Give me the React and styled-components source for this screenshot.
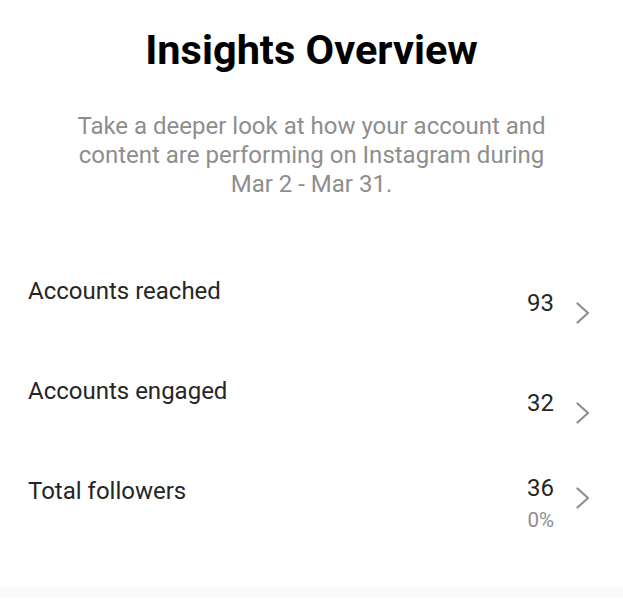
import React from 'react';
import styled, { createGlobalStyle } from 'styled-components';

const GlobalStyle = createGlobalStyle`
  html, body {
    margin: 0;
    padding: 0;
    background: #ffffff;
    font-family: Roboto, "Liberation Sans", sans-serif;
  }
`;

const Page = styled.div`
  width: 623px;
  height: 600px;
  display: flex;
  flex-direction: column;
  background: #fff;
  overflow: hidden;
`;

const Header = styled.header`
  display: flex;
  flex-direction: column;
  align-items: center;
  padding-top: 22px;
`;

const Title = styled.h1`
  margin: 0;
  font-size: 41.5px;
  font-weight: 700;
  color: #000;
  line-height: 56px;
`;

const Subtitle = styled.p`
  margin: 34px 0 0;
  width: 490px;
  text-align: center;
  font-size: 24px;
  line-height: 29px;
  color: #8e8e8e;
`;

const List = styled.div`
  display: flex;
  flex-direction: column;
  margin-top: 54px;
`;

const Row = styled.div`
  display: flex;
  align-items: center;
  justify-content: space-between;
  padding: 0 33px 0 28px;
  height: 100px;
`;

const Label = styled.span`
  font-size: 24px;
  line-height: 28px;
  margin-bottom: 24px;
  color: #262626;
`;

const Side = styled.div`
  display: flex;
  align-items: flex-start;
  gap: 22px;
`;

const Values = styled.div`
  display: flex;
  flex-direction: column;
  align-items: flex-end;
`;

const Value = styled.span`
  font-size: 24px;
  line-height: 26px;
  color: #262626;
`;

const Delta = styled.span`
  margin-top: 7px;
  font-size: 20.5px;
  line-height: 24px;
  color: #8e8e8e;
`;

const Chevron = styled.svg`
  width: 14px;
  height: 22px;
  margin-top: 12px;
  margin-bottom: -12px;
`;

const Footer = styled.div`
  height: 11px;
  margin-top: auto;
  margin-bottom: 2px;
  background: #fafafa;
`;

const rows = [
  { label: 'Accounts reached', value: '93' },
  { label: 'Accounts engaged', value: '32' },
  { label: 'Total followers', value: '36', delta: '0%' },
];

const Arrow = () => (
  <Chevron viewBox="0 0 14 22" fill="none">
    <path d="M1.5 1.5 L12 11 L1.5 20.5" stroke="#8e8e8e" strokeWidth="2.2" strokeLinecap="round" strokeLinejoin="round" />
  </Chevron>
);

export default function App() {
  return (
    <Page>
      <GlobalStyle />
      <Header>
        <Title>Insights Overview</Title>
        <Subtitle>
          Take a deeper look at how your account and content are performing on Instagram during Mar 2 - Mar 31.
        </Subtitle>
      </Header>
      <List>
        {rows.map((r) => (
          <Row key={r.label}>
            <Label>{r.label}</Label>
            <Side>
              <Values>
                <Value>{r.value}</Value>
                {r.delta && <Delta>{r.delta}</Delta>}
              </Values>
              <Arrow />
            </Side>
          </Row>
        ))}
      </List>
      <Footer />
    </Page>
  );
}
